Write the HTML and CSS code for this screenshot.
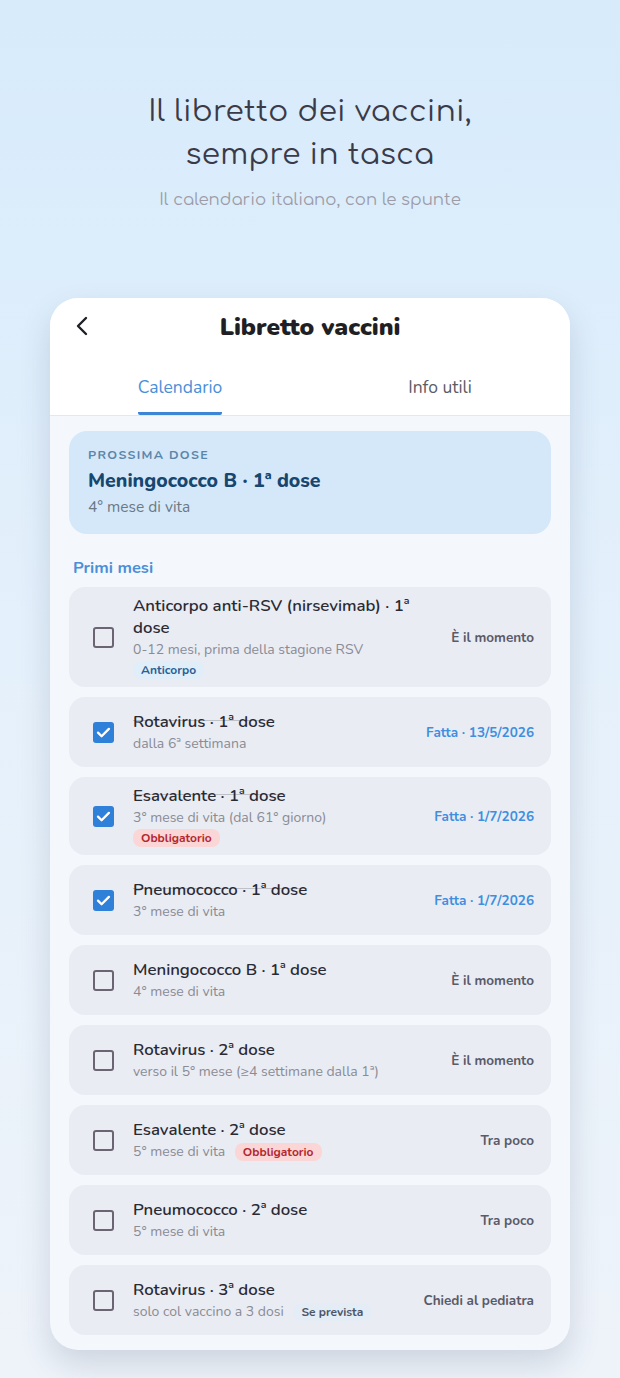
FILE: index.html
```html
<!DOCTYPE html>
<html lang="it">
<head>
    <meta charset="UTF-8">
    <meta name="viewport" content="width=device-width, initial-scale=1.0">
    <title>Libretto vaccini</title>
    <link rel="stylesheet" href="styles.css">
</head>
<body>
<header class="hero">
    <h1>Il libretto dei vaccini,<br>sempre in tasca</h1>
    <p>Il calendario italiano, con le spunte</p>
</header>

<div class="phone">
    <!-- barra in alto -->
    <div class="topbar">
        <svg class="back" width="22" height="22" viewBox="0 0 22 22">
            <path d="M14 3 L6 11 L14 19" fill="none" stroke="#1f1f26" stroke-width="2.4" stroke-linecap="round" stroke-linejoin="round"/>
        </svg>
        <h2>Libretto vaccini</h2>
    </div>

    <div class="tabs">
        <div class="tab active"><span>Calendario</span></div>
        <div class="tab"><span>Info utili</span></div>
    </div>

    <div class="content">
        <div class="next">
            <div class="next-label">PROSSIMA DOSE</div>
            <div class="next-title">Meningococco B · 1ª dose</div>
            <div class="next-sub">4° mese di vita</div>
        </div>

        <div class="section">Primi mesi</div>

        <div class="row">
            <span class="check"></span>
            <div class="info">
                <div class="title">Anticorpo anti-RSV (nirsevimab) · 1ª dose</div>
                <div class="sub">0-12 mesi, prima della stagione RSV</div>
                <div class="badge blue">Anticorpo</div>
            </div>
            <div class="status">È il momento</div>
        </div>

        <div class="row">
            <span class="check on"></span>
            <div class="info">
                <div class="title done">Rotavirus · 1ª dose</div>
                <div class="sub">dalla 6ª settimana</div>
            </div>
            <div class="status fatta">Fatta · 13/5/2026</div>
        </div>

        <div class="row">
            <span class="check on"></span>
            <div class="info">
                <div class="title done">Esavalente · 1ª dose</div>
                <div class="sub">3° mese di vita (dal 61° giorno)</div>
                <div class="badge red">Obbligatorio</div>
            </div>
            <div class="status fatta">Fatta · 1/7/2026</div>
        </div>

        <div class="row">
            <span class="check on"></span>
            <div class="info">
                <div class="title done">Pneumococco · 1ª dose</div>
                <div class="sub">3° mese di vita</div>
            </div>
            <div class="status fatta">Fatta · 1/7/2026</div>
        </div>

        <div class="row">
            <span class="check"></span>
            <div class="info">
                <div class="title">Meningococco B · 1ª dose</div>
                <div class="sub">4° mese di vita</div>
            </div>
            <div class="status">È il momento</div>
        </div>

        <div class="row">
            <span class="check"></span>
            <div class="info">
                <div class="title">Rotavirus · 2ª dose</div>
                <div class="sub">verso il 5° mese (≥4 settimane dalla 1ª)</div>
            </div>
            <div class="status">È il momento</div>
        </div>

        <div class="row">
            <span class="check"></span>
            <div class="info">
                <div class="title">Esavalente · 2ª dose</div>
                <div class="sub">5° mese di vita <span class="badge red">Obbligatorio</span></div>
            </div>
            <div class="status">Tra poco</div>
        </div>

        <div class="row">
            <span class="check"></span>
            <div class="info">
                <div class="title">Pneumococco · 2ª dose</div>
                <div class="sub">5° mese di vita</div>
            </div>
            <div class="status">Tra poco</div>
        </div>

        <div class="row">
            <span class="check"></span>
            <div class="info">
                <div class="title">Rotavirus · 3ª dose</div>
                <div class="sub">solo col vaccino a 3 dosi <span class="badge grey">Se prevista</span></div>
            </div>
            <div class="status">Chiedi al pediatra</div>
        </div>
    </div>
</div>
</body>
</html>
```

FILE: styles.css
```css
body {
    margin: 0;
    height: 1378px;
    overflow: hidden;
    font-family: "Nunito", "Lato", "Noto Sans", sans-serif;
    background: linear-gradient(180deg, #d7ebfb 0%, #e4f0fb 45%, #eef3f9 100%);
    color: #2a2a33;
}

/* intestazione */
.hero {
    text-align: center;
    padding-top: 90px;
}
.hero h1 {
    margin: 0;
    font-family: "Comfortaa", "Lato", sans-serif;
    font-weight: 400;
    font-size: 29.5px;
    line-height: 43px;
    letter-spacing: 0.3px;
    color: #3a3a48;
}
.hero p {
    margin: 14px 0 0;
    font-family: "Comfortaa", "Lato", sans-serif;
    font-size: 16.5px;
    color: #9b9ca8;
}

/* telefono */
.phone {
    margin: 89px auto 0;
    width: 520px;
    height: 1052px;
    border-radius: 28px;
    background: #f4f8fd;
    overflow: hidden;
    box-shadow: 0 14px 30px rgba(60, 80, 110, 0.18);
}
.topbar {
    position: relative;
    height: 58px;
    background: #fff;
    display: flex;
    align-items: center;
    justify-content: center;
}
.topbar .back {
    position: absolute;
    left: 22px;
    top: 17px;
}
.topbar h2 {
    margin: 0;
    font-family: "Nunito", "Lato", sans-serif;
    font-weight: 900;
    font-size: 24.5px;
    color: #1f1f26;
}
.tabs {
    display: flex;
    height: 59px;
    background: #fff;
    border-bottom: 1px solid #e3e8ef;
}
.tab {
    flex: 1;
    display: flex;
    justify-content: center;
    align-items: flex-end;
    font-size: 17.5px;
    color: #5c5c66;
}
.tab span {
    padding-bottom: 13px;
    border-bottom: 3px solid transparent;
}
.tab.active {
    color: #4a8fd8;
}
.tab.active span {
    border-bottom-color: #3d86d6;
    border-radius: 2px;
}

.content {
    padding: 15px 19px 0;
}

/* prossima dose */
.next {
    background: #d5e8f9;
    border-radius: 18px;
    padding: 15px 19px 17px;
}
.next-label {
    font-size: 12.5px;
    line-height: 18px;
    font-weight: 700;
    letter-spacing: 1.3px;
    color: #5b86aa;
}
.next-title {
    margin-top: 4px;
    font-size: 19.5px;
    line-height: 26px;
    font-weight: 800;
    color: #17466f;
}
.next-sub {
    margin-top: 3px;
    font-size: 15.5px;
    line-height: 20px;
    color: #6b7986;
}

.section {
    margin: 22px 0 8px 4px;
    font-size: 16.5px;
    font-weight: 700;
    color: #4a8fd8;
}

/* righe */
.row {
    display: flex;
    align-items: center;
    min-height: 70px;
    box-sizing: border-box;
    padding: 8px 17px 8px 24px;
    margin-bottom: 10px;
    background: #e9ecf3;
    border-radius: 16px;
}
.check {
    flex: none;
    width: 17px;
    height: 17px;
    border: 2px solid #6b6472;
    border-radius: 3px;
    margin-right: 19px;
}
.check.on {
    width: 21px;
    height: 21px;
    border: none;
    background: #2f80d8 url("data:image/svg+xml,%3Csvg xmlns='http://www.w3.org/2000/svg' viewBox='0 0 21 21'%3E%3Cpath d='M5 10.6l3.6 3.6 7.3-7.3' fill='none' stroke='white' stroke-width='2.3' stroke-linecap='round' stroke-linejoin='round'/%3E%3C/svg%3E") center / 21px no-repeat;
}
.info {
    flex: 1;
    min-width: 0;
    padding-right: 24px;
}
.title {
    font-size: 16.8px;
    font-weight: 600;
    line-height: 22px;
    color: #2a2a33;
}
.title.done {
    text-decoration: line-through;
    text-decoration-color: rgba(40, 40, 50, 0.22);
}
.sub {
    font-size: 14px;
    line-height: 21px;
    color: #8a8b95;
}
.badge {
    display: inline-block;
    font-size: 12px;
    font-weight: 700;
    line-height: 18px;
    padding: 0 8px;
    border-radius: 8px;
}
.info > .badge {
    display: block;
    width: fit-content;
    margin-top: 1px;
}
.sub .badge {
    margin-left: 6px;
}
.badge.blue {
    background: #e0eefa;
    color: #2b5f96;
}
.badge.red {
    background: #fbd6d6;
    color: #b3272f;
}
.badge.grey {
    background: #e4ecf5;
    color: #4c5668;
}
.status {
    flex: none;
    font-size: 13.5px;
    font-weight: 700;
    color: #5a5a68;
}
.status.fatta {
    color: #3f8fe0;
}
```
